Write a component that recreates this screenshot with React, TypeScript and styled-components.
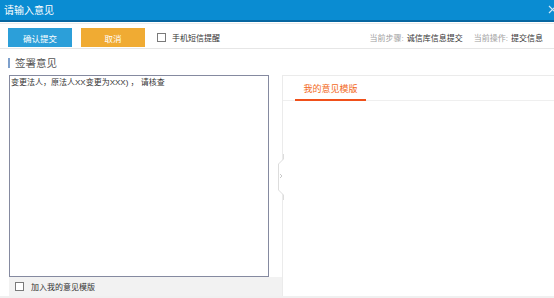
import React from "react";
import styled, { createGlobalStyle } from "styled-components";

const Global = createGlobalStyle`
  html, body { margin: 0; padding: 0; background: #fff; }
  body { width: 554px; height: 298px; overflow: hidden; font-family: "Liberation Sans", "Noto Sans CJK SC", sans-serif; }
  * { box-sizing: border-box; }
`;

const Page = styled.div`
  width: 554px;
  height: 298px;
  display: flex;
  flex-direction: column;
  overflow: hidden;
`;

const TitleBar = styled.div`
  height: 22px;
  flex: none;
  background: #0a8cd2;
  border-bottom: 2px solid #0766a0;
  display: flex;
  align-items: center;
  justify-content: space-between;
  padding-left: 4px;
  padding-top: 1px;
`;

const Title = styled.span`
  color: #fff;
  font-size: 10px;
  line-height: 19px;
`;

const Close = styled.svg`
  width: 9px;
  height: 9px;
  margin-right: -3px;
  margin-top: -2px;
`;

const Toolbar = styled.div`
  flex: none;
  margin-top: 1px;
  border-top: 1px solid #ececec;
  border-bottom: 1px solid #e6e6e6;
  padding: 4px 11px 1px 8px;
  display: flex;
  align-items: center;
`;

const Button = styled.button<{ $tone: "blue" | "orange" }>`
  width: 64px;
  height: 19px;
  border: none;
  margin: 0 9px 0 0;
  padding: 0;
  color: #fff;
  font-family: inherit;
  font-size: 8.5px;
  background: ${(p) => (p.$tone === "blue" ? "#2c9fd9" : "#f0ab33")};
`;

const Check = styled.span`
  display: inline-block;
  width: 9px;
  height: 9px;
  border: 1px solid #7a7a7a;
  background: #fff;
  flex: none;
`;

const CheckLabel = styled.label`
  display: flex;
  align-items: center;
  gap: 6px;
  font-size: 8px;
  color: #333;
  margin-left: 3px;
`;

const Info = styled.div`
  margin-left: auto;
  display: flex;
  gap: 11px;
  font-size: 8px;
`;

const InfoItem = styled.span`
  color: #333;
`;

const InfoKey = styled.span`
  color: #a0a0a0;
  margin-right: 3px;
`;

const Heading = styled.div`
  flex: none;
  height: 26px;
  display: flex;
  align-items: center;
  padding-left: 8px;
  padding-top: 1px;
  font-size: 10.5px;
  color: #555;
  &::before {
    content: "";
    width: 2px;
    height: 10px;
    background: #7ea0cc;
    margin-right: 5px;
  }
`;

const Body = styled.div`
  flex: 1;
  display: flex;
  border-bottom: 2px solid #f0f0f0;
  min-height: 0;
`;

const LeftCol = styled.div`
  width: 282px;
  padding-left: 9px;
  display: flex;
  flex-direction: column;
`;

const Editor = styled.div`
  width: 260px;
  flex: 1;
  border: 1px solid #858aa0;
  padding: 1px 1px;
  font-size: 8px;
  color: #333;
  line-height: 11px;
  white-space: pre;
`;

const Footer = styled.div`
  height: 19px;
  flex: none;
  background: #f2f2f2;
  display: flex;
  align-items: center;
  padding-left: 6px;
  gap: 7px;
  font-size: 8px;
  color: #333;
`;

const RightCol = styled.div`
  flex: 1;
  position: relative;
  border-left: 1px solid #ebebeb;
  border-top: 1px solid #ebebeb;
`;

const TabBar = styled.div`
  height: 25px;
  border-bottom: 1px solid #efefef;
  padding-left: 12px;
  display: flex;
  align-items: flex-end;
`;

const Tab = styled.div<{ $active?: boolean }>`
  width: 71px;
  height: 24px;
  display: flex;
  align-items: center;
  justify-content: center;
  font-size: 9px;
  color: ${(p) => (p.$active ? "#f26a22" : "#333")};
  border-bottom: 2px solid ${(p) => (p.$active ? "#f0501a" : "transparent")};
  margin-bottom: -1px;
`;

const Handle = styled.svg`
  position: absolute;
  left: -6px;
  top: 78px;
  width: 8px;
  height: 46px;
`;

export default function App() {
  return (
    <>
      <Global />
      <Page>
        <TitleBar>
          <Title>请输入意见</Title>
          <Close viewBox="0 0 9 9">
            <path d="M1 1 L8 8 M8 1 L1 8" stroke="#cfe8f7" strokeWidth="1.2" fill="none" />
          </Close>
        </TitleBar>
        <Toolbar>
          <Button $tone="blue">确认提交</Button>
          <Button $tone="orange">取消</Button>
          <CheckLabel>
            <Check />
            手机短信提醒
          </CheckLabel>
          <Info>
            <InfoItem>
              <InfoKey>当前步骤:</InfoKey>诚信库信息提交
            </InfoItem>
            <InfoItem>
              <InfoKey>当前操作:</InfoKey>提交信息
            </InfoItem>
          </Info>
        </Toolbar>
        <Heading>签署意见</Heading>
        <Body>
          <LeftCol>
            <Editor>变更法人，原法人XX变更为XXX) ， 请核查</Editor>
            <Footer>
              <Check />
              加入我的意见模版
            </Footer>
          </LeftCol>
          <RightCol>
            <TabBar>
              <Tab $active>我的意见模版</Tab>
            </TabBar>
            <Handle viewBox="0 0 8 46">
              <path d="M6.5 0 V5 L1.5 10 V36 L6.5 41 V46" stroke="#dddddd" strokeWidth="1" fill="#fff" />
              <path d="M3 20 L5 22 L3 24" stroke="#bbbbbb" strokeWidth="0.8" fill="none" />
            </Handle>
          </RightCol>
        </Body>
      </Page>
    </>
  );
}
